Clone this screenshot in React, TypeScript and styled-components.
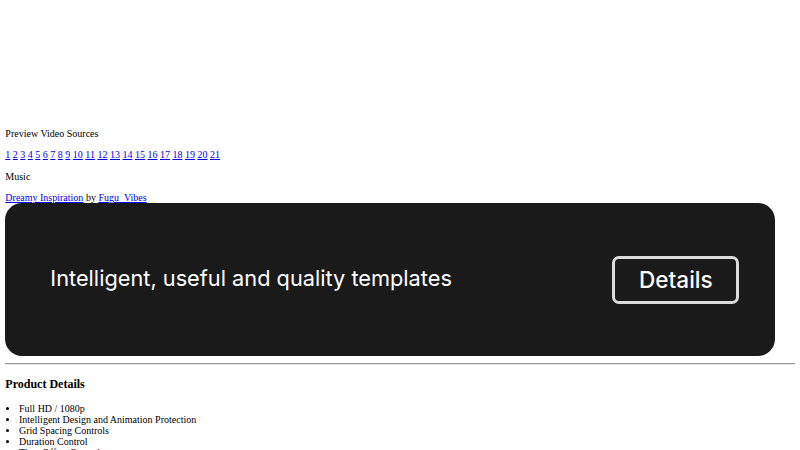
import React from "react";
import styled, { createGlobalStyle } from "styled-components";

const GlobalStyle = createGlobalStyle`
  body {
    margin: 5.33px;
    font-family: "Liberation Serif", "Times New Roman", serif;
    font-size: 10px;
    color: #000;
    background: #fff;
  }
`;

const VideoSlot = styled.div`
  height: 112px;
`;

const Para = styled.p`
  margin: 10.5px 0;
`;

const Link = styled.a`
  color: #0000ee;
  text-decoration: underline;
`;

const Credit = styled.div``;

const Banner = styled.div`
  width: 770px;
  height: 153px;
  background: #1a1a1a;
  border-radius: 17px;
  display: flex;
  align-items: center;
  justify-content: space-between;
  padding: 0 36px 0 45px;
  box-sizing: border-box;
  font-family: Inter, "Liberation Sans", sans-serif;
  color: #fff;
`;

const Tagline = styled.span`
  font-size: 21.75px;
  font-weight: 400;
  margin-top: -3px;
`;

const DetailsButton = styled.span`
  width: 127px;
  height: 48px;
  box-sizing: border-box;
  border: 3px solid #dcdcdc;
  border-radius: 7px;
  display: flex;
  align-items: center;
  justify-content: center;
  font-size: 22.6px;
  font-weight: 500;
`;

const Rule = styled.hr`
  margin: 7px 0 6px;
  border: none;
  border-top: 1px solid #9a9a9a;
  border-bottom: 1px solid #e6e6e6;
`;

const SectionTitle = styled.h3`
  font-size: 12px;
  font-weight: bold;
  margin: 12px 0 11px;
`;

const FeatureList = styled.ul`
  margin: 10px 0;
  padding-left: 13.7px;
`;

const sources = Array.from({ length: 21 }, (_, i) => i + 1);

const features = [
  "Full HD / 1080p",
  "Intelligent Design and Animation Protection",
  "Grid Spacing Controls",
  "Duration Control",
  "Time Offset Controls",
  "Color Controls",
];

export default function App() {
  return (
    <>
      <GlobalStyle />
      <VideoSlot />
      <Para>Preview Video Sources</Para>
      <Para>
        {sources.map((n) => (
          <React.Fragment key={n}>
            <Link href="#">{n}</Link>{" "}
          </React.Fragment>
        ))}
      </Para>
      <Para>Music</Para>
      <Credit>
        <Link href="#">Dreamy Inspiration</Link> by <Link href="#">Fugu_Vibes</Link>
      </Credit>
      <Banner>
        <Tagline>Intelligent, useful and quality templates</Tagline>
        <DetailsButton>Details</DetailsButton>
      </Banner>
      <Rule />
      <SectionTitle>Product Details</SectionTitle>
      <FeatureList>
        {features.map((f) => (
          <li key={f}>{f}</li>
        ))}
      </FeatureList>
    </>
  );
}
